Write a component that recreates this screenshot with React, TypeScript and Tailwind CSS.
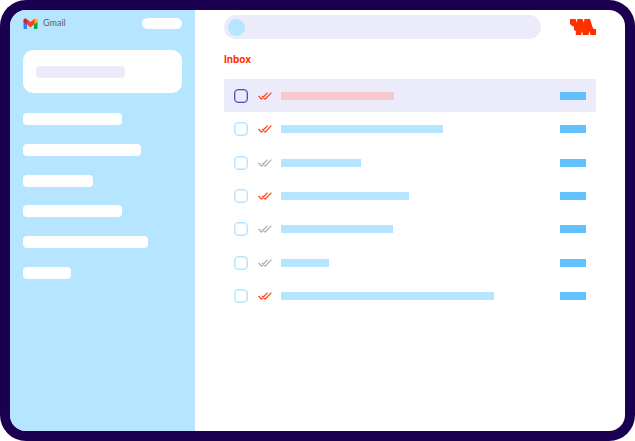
const folders = [
  { name: 'Folder 1', width: 'w-[99px]' },
  { name: 'Folder 2', width: 'w-[118px]' },
  { name: 'Folder 3', width: 'w-[70px]' },
  { name: 'Folder 4', width: 'w-[99px]' },
  { name: 'Folder 5', width: 'w-[125px]' },
  { name: 'Folder 6', width: 'w-[48px]' },
];

type Mail = { id: number; width: string; opened: boolean; selected?: boolean };

const mails: Mail[] = [
  { id: 1, width: 'w-[113px]', opened: true, selected: true },
  { id: 2, width: 'w-[162px]', opened: true },
  { id: 3, width: 'w-[80px]', opened: false },
  { id: 4, width: 'w-[128px]', opened: true },
  { id: 5, width: 'w-[112px]', opened: false },
  { id: 6, width: 'w-[48px]', opened: false },
  { id: 7, width: 'w-[213px]', opened: true },
];

function GmailLogo() {
  return (
    <svg className="h-[11px] w-[15px]" viewBox="0 0 15 11" aria-hidden="true">
      <path fill="#2684fc" d="M.5 3h3.500v8H1.500a1 1 0 0 1-1-1z" />
      <path fill="#00ac47" d="M11 3h3.500v7a1 1 0 0 1-1 1H11z" />
      <path fill="#ffba00" d="M11 1.200C12.300 0 14.500.4 14.500 2v2L11 6.500z" />
      <path fill="#ff3b2f" d="M3.500.8l4 3.200 4-3.200V6l-4 3.400-4-3.400z" />
      <path fill="#d52528" d="M4 1.200C2.700 0 .5.400.5 2v2L4 6.500z" />
    </svg>
  );
}

function BrandLogo() {
  return (
    <svg className="h-4 w-[26px] shrink-0" viewBox="0 0 26 16" fill="#ff3000" aria-hidden="true">
      <path d="M0 0H5.500L7 4 7.300 0H12.500L14 4 14.300 0H20L22.300 7.500 23.500 10H26V16H20.500L19 12 18.700 16H13L11.700 12 11.300 16H5.800V12L4 11V7.500L2 7 0 5z" />
    </svg>
  );
}

function DoubleCheck({ opened }: { opened: boolean }) {
  return (
    <svg
      className={`h-2 w-[14px] shrink-0 ${opened ? 'text-[#ff4a24]' : 'text-[#b0b0b0]'}`}
      viewBox="0 0 14 8"
      fill="none"
      stroke="currentColor"
      strokeWidth="1.3"
      aria-hidden="true"
    >
      <path d="M.5 4l3 3L9.500.6M4 4l3.200 3L13.400.6" />
    </svg>
  );
}

function Sidebar() {
  return (
    <aside className="w-[185px] shrink-0 bg-[#b5e5ff] px-[13px] pt-[7px]">
      <div className="flex h-3 items-center justify-between">
        <div className="flex items-center gap-[5px]">
          <GmailLogo />
          <span className="[font-family:Lato,sans-serif] text-[9px] leading-3 text-[#5f6368]">Gmail</span>
        </div>
        <button type="button" aria-label="Account" className="h-[11px] w-10 rounded-full bg-white" />
      </div>
      <button
        type="button"
        aria-label="Compose"
        className="mt-[21px] flex h-[43px] w-full items-center rounded-[10px] bg-white px-[13px]"
      >
        <span className="h-3 w-[89px] rounded bg-[#ecebf9]" />
      </button>
      <nav className="mt-5 flex h-[166px] flex-col justify-between">
        {folders.map((folder) => (
          <a
            key={folder.name}
            href="#"
            aria-label={folder.name}
            className={`block h-3 rounded bg-white ${folder.width}`}
          />
        ))}
      </nav>
    </aside>
  );
}

function MailRow({ mail }: { mail: Mail }) {
  return (
    <li className={`flex items-center rounded-[1px] px-[10px] ${mail.selected ? 'bg-[#ecebf9]' : ''}`}>
      <input
        type="checkbox"
        aria-label={`Select mail ${mail.id}`}
        className={`size-[14px] shrink-0 appearance-none rounded border inset-ring ${
          mail.selected ? 'border-[#5546c4] inset-ring-[#5546c4]/30' : 'border-[#b5e5ff] inset-ring-[#b5e5ff]/50'
        }`}
      />
      <div className="ml-[10px] flex flex-1 items-center gap-[9px]">
        <DoubleCheck opened={mail.opened} />
        <div className={`h-2 ${mail.width} ${mail.selected ? 'bg-[#f6c8ca]' : 'bg-[#b5e5ff]'}`} />
      </div>
      <div className="h-2 w-[26px] bg-[#62c0fc]" />
    </li>
  );
}

export default function App() {
  return (
    <div className="min-h-screen bg-white">
      <div className="flex min-h-screen rounded-[26px] bg-[#1b0052] p-[10px]">
        <div className="flex flex-1 overflow-hidden rounded-2xl bg-white">
          <Sidebar />
          <main className="flex-1 pt-[5px] pr-[29px] pl-[29px]">
            <header className="flex items-center gap-[29px]">
              <label className="flex h-6 flex-1 items-center rounded-full bg-[#ecebf9] px-1">
                <span className="size-[17px] shrink-0 rounded-full bg-[#b5e5ff]" />
                <input type="search" aria-label="Search mail" className="w-full min-w-0 bg-transparent px-2 text-xs outline-none" />
              </label>
              <BrandLogo />
            </header>
            <h1 className="mt-[14px] [font-family:Inter,sans-serif] text-[10px] leading-3 font-bold text-[#ff3000]">Inbox</h1>
            <ul className="mt-[14px] grid h-[234px] grid-rows-7">
              {mails.map((mail) => (
                <MailRow key={mail.id} mail={mail} />
              ))}
            </ul>
          </main>
        </div>
      </div>
    </div>
  );
}
